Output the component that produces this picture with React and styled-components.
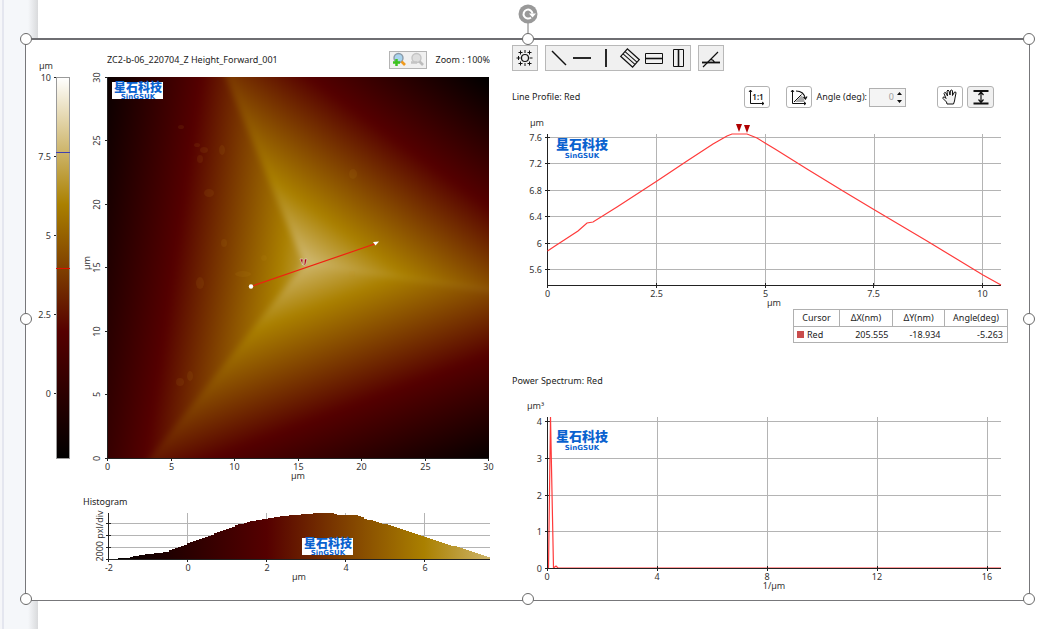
import React from 'react';
import styled, { createGlobalStyle, css } from "styled-components";


const GlobalStyle = createGlobalStyle`
  * {
    box-sizing: border-box;
  }

  body {
    margin: 0;
    background: #fff;
    font-family: "Noto Sans", "Noto Sans CJK SC", sans-serif;
    font-size: 9px;
    line-height: 12px;
    color: #222;
  }

  button, input {
    font: inherit;
    color: inherit;
  }
`;

const Page = styled.main`
  min-height: 100vh;
  padding: 38px 12px 28px 25px;
  background: linear-gradient(
    90deg,
    #f5f6f9 0 2px,
    #e4e6ef 2px 4px,
    #f5f7fa 4px 28px,
    #d9dadc 38px,
    #fff 38px
  );
`;

const Frame = styled.section`
  position: relative;
  display: grid;
  grid-template-columns: minmax(0, 464fr) minmax(0, 496fr);
  column-gap: 22px;
  padding: 0 21px 6px 0;
  background: #fff;
  border: 1px solid #77777a;
  border-top: 2px solid #6e6e72;
`;

const Handle = styled.span`
  position: absolute;
  left: ${({ $x }) => $x};
  top: ${({ $y }) => $y};
  width: 12px;
  height: 12px;
  margin: -7px 0 0 -6px;
  border: 1px solid #6a6a6a;
  border-radius: 50%;
  background: #fff;
`;

const RotateHandle = styled.svg`
  position: absolute;
  left: 50%;
  top: -36px;
  width: 20px;
  height: 30px;
  margin-left: -10px;
`;

const Left = styled.div`
  display: grid;
  grid-template-columns: minmax(0, 57fr) minmax(0, 407fr);
  grid-template-rows: auto auto auto auto;
  align-content: start;
`;

const BarCell = styled.div`
  grid-column: 1;
  grid-row: 1 / span 2;
`;

const MapCell = styled.div`
  grid-column: 2;
`;

const MapHeader = styled.div`
  grid-column: 2;
  display: flex;
  align-items: center;
  height: 34px;
  padding: 5px 0 0 24px;
`;

const ZoomButtons = styled.div`
  display: flex;
  margin-left: auto;
  margin-right: 9px;
  border: 1px solid #b4b4b4;
  background: #f0f0f0;
`;

const HistogramTitle = styled.h2`
  grid-column: 2;
  margin: 0;
  padding: 12px 0 1px;
  font-size: 9px;
  font-weight: 400;
`;

const Right = styled.div`
  display: flex;
  flex-direction: column;
`;

const Toolbar = styled.div`
  display: flex;
  gap: 7px;
  padding-top: 5px;
`;

const ToolGroup = styled.div`
  display: flex;
  border: 1px solid #b8b8b8;
  background: #f0f0f0;
`;

const IconButton = styled.button`
  display: flex;
  align-items: center;
  justify-content: center;
  flex: none;
  width: ${({ $w }) => $w || 24}px;
  height: ${({ $h }) => $h || 24}px;
  padding: 0;
  border: 0;
  background: none;
  ${({ $boxed }) => $boxed && css`
    border: 1px solid #b2b2b2;
    border-radius: 3px;
    background: ${({ $active }) => ($active ? '#f0f0f0' : '#fff')};
  `}
`;

const Title = styled.h2`
  margin: 0;
  font-size: 9px;
  font-weight: 400;
  margin-top: ${({ $top }) => $top || 0}px;
`;

const ProfileHeader = styled.div`
  display: flex;
  align-items: center;
  padding: 15px 14px 8px 0;
`;

const ProfileTools = styled.div`
  display: flex;
  align-items: center;
  gap: 4px;
  margin-left: auto;
`;

const AngleLabel = styled.label`
  display: flex;
  align-items: center;
  gap: 2px;
  margin: 0 27px 0 0;
`;

const ScaleButton = styled(IconButton)`
  margin-right: 12px;
`;

const Spinner = styled.span`
  display: flex;
  align-items: center;
  width: 37px;
  height: 19px;
  border: 1px solid #b0b0b0;
  background: #f4f4f4;
`;

const AngleInput = styled.input`
  flex: 1;
  min-width: 0;
  width: 20px;
  padding: 0;
  border: 0;
  background: none;
  color: #a0a0a0;
  text-align: right;
`;

const Chart = styled.svg`
  display: block;
  width: 100%;
  height: auto;
  overflow: visible;

  text {
    font-size: 9px;
    fill: #333;
  }
`;

const Grid = styled.path`
  stroke: #b4b4b4;
  stroke-width: 1;
  fill: none;
  shape-rendering: crispEdges;
`;

const Axis = styled.path`
  stroke: #222;
  stroke-width: 1;
  fill: none;
  shape-rendering: crispEdges;
`;

const Trace = styled.polyline`
  fill: none;
  stroke: #ff3a3a;
  stroke-width: 1.2;
`;

const LogoName = styled.text`
  && {
    font-family: "Noto Sans CJK SC", sans-serif;
    font-weight: 900;
    font-size: ${({ $size }) => $size}px;
    fill: #0a62cf;
  }
`;

const LogoLatin = styled.text`
  && {
    font-family: "DejaVu Sans", sans-serif;
    font-weight: 700;
    font-size: 7px;
    fill: #0a62cf;
  }
`;

const RatioText = styled.text`
  font-size: 8px;
  font-weight: 600;
  fill: #111;
  stroke: none;
`;

const CursorTable = styled.table`
  align-self: flex-end;
  width: 215px;
  table-layout: fixed;
  border-collapse: collapse;
  border: 1px solid #b0b0b0;

  th, td {
    height: 16px;
    padding: 0 4px;
    font-weight: 400;
  }

  th {
    height: 17px;
    padding: 0;
    border: 1px solid #b0b0b0;
    text-align: center;
  }

  td {
    text-align: right;
  }

  td:first-child {
    padding-left: 3px;
    text-align: left;
  }

  th:nth-child(1) { width: 46px; }
  th:nth-child(2) { width: 53px; }
  th:nth-child(3) { width: 52px; }
`;

const Swatch = styled.span`
  display: inline-block;
  width: 7px;
  height: 7px;
  margin-right: 3px;
  background: #c94c4c;
`;


const palette = [
  [0, '#000000'],
  [1 / 3, '#550000'],
  [2 / 3, '#aa8000'],
  [1, '#ffffff'],
];

const PaletteStops = () => palette.map(([t, color]) => (
  <stop key={t} offset={t} stopColor={color} />
));

const Logo = ({ x, y, boxed }) => (
  <g transform={`translate(${x} ${y})`}>
    {boxed && <rect width="51" height="17" fill="#fff" />}
    <LogoName $size={boxed ? 12 : 13} x="26" y={boxed ? 10 : 9} textAnchor="middle">星石科技</LogoName>
    <LogoLatin x="26" y={boxed ? 17 : 18} textAnchor="middle">SinGSUK</LogoLatin>
  </g>
);

const ColorBar = () => (
  <Chart viewBox="0 0 57 444" role="img" aria-label="Height scale">
    <defs>
      <linearGradient id="scale" x1="0" y1="1" x2="0" y2="0">
        <PaletteStops />
      </linearGradient>
    </defs>
    <text x="13" y="29">µm</text>
    <rect x="30.5" y="37.5" width="13" height="381" fill="url(#scale)" stroke="#9a9a9a" />
    {[10, 7.5, 5, 2.5, 0].map((v, i) => (
      <g key={v}>
        <Axis d={`M28 ${37.5 + i * 79}h2`} />
        <text x="25" y={41 + i * 79} textAnchor="end">{v}</text>
      </g>
    ))}
    <path d="M30 112.5h14" stroke="#4040b0" />
    <path d="M30 228.5h14" stroke="#e01000" />
  </Chart>
);

// faces of the scanned pyramid, each a plane shaded from its foot to the apex
const faces = [
  { id: 'left', points: '-20,-48 117,-5 119,0 197,187 44,380 38,388 -20,400', axis: [-37, 166, 278, 212] },
  { id: 'top', points: '117,-5 119,0 197,187 381,213 400,216 400,-20 110,-20', axis: [381, 0, 197, 255] },
  { id: 'bottom', points: '400,216 381,213 197,187 44,380 36,390 400,400', axis: [381, 390, 271, 95] },
];

const specks = [
  [97, 73, 4, 3], [115, 73, 3, 5], [90, 68, 3, 2], [93, 82, 3, 4], [102, 116, 5, 4], [93, 206, 4, 6],
  [74, 50, 3, 2], [246, 97, 4, 5], [73, 305, 4, 4], [83, 299, 3, 5], [136, 197, 8, 3],
  [117, 166, 3, 4], [245, 197, 3, 3], [214, 214, 3, 2], [157, 181, 3, 3],
];

const HeightMap = () => (
  <Chart viewBox="0 0 407 410" role="img" aria-label="Height map">
    <defs>
      {faces.map(({ id, axis }) => (
        <linearGradient key={id} id={id} gradientUnits="userSpaceOnUse" x1={axis[0]} y1={axis[1]} x2={axis[2]} y2={axis[3]}>
          <PaletteStops />
        </linearGradient>
      ))}
      <clipPath id="scan"><rect width="382" height="382" /></clipPath>
      <filter id="round" x="-5%" y="-5%" width="110%" height="110%" colorInterpolationFilters="sRGB">
        <feGaussianBlur stdDeviation="3" />
      </filter>
    </defs>
    <g transform="translate(24 3)">
      <g clipPath="url(#scan)">
        <g filter="url(#round)">
          <rect x="-20" y="-20" width="420" height="420" fill="url(#left)" />
          {faces.map(({ id, points }) => <polygon key={id} points={points} fill={`url(#${id})`} />)}
        </g>
        {specks.map(([x, y, rx, ry]) => (
          <ellipse key={`${x}-${y}`} cx={x} cy={y} rx={rx} ry={ry} fill="#c09020" opacity="0.1" />
        ))}
      </g>
      <Logo x={5} y={5} boxed />
      <path d="M144 209.500L269 166.500" stroke="#f02010" strokeWidth="1.2" />
      <circle cx="144" cy="209.500" r="2.200" fill="#fff" />
      <path d="M266 165l6 -0.500l-3.500 4z" fill="#fff" />
      <path d="M193 182h3l-0.500 6zM197.500 182h2.500l-1.500 6l-1.500 1z" fill="#b00010" stroke="#ddc" strokeWidth="0.600" />
      <Axis d="M0.500 0V381.500H382" />
      {[0, 5, 10, 15, 20, 25, 30].map((v, i) => {
        const p = Math.min(381.5, Math.round(i * 63.6) + 0.5);
        return (
          <g key={v}>
            <Axis d={`M${p} 381v3M-2 ${382 - p}h2`} />
            <text x={p} y="393" textAnchor="middle">{v}</text>
            <text transform={`translate(-7 ${382 - p}) rotate(-90)`} textAnchor="middle">{v}</text>
          </g>
        );
      })}
      <text x="191" y="402" textAnchor="middle">µm</text>
      <text transform="translate(-17 186) rotate(-90)" textAnchor="middle">µm</text>
    </g>
  </Chart>
);

// [x, count height] outline of the distribution
const counts = [
  [0, 0], [16, 1], [31, 4], [56, 7], [79, 16], [101, 24], [127, 34], [141, 38], [161, 41], [174, 43],
  [197, 45], [208, 46], [221, 46], [228, 44], [247, 44], [256, 40], [278, 34], [314, 22], [335, 15],
  [355, 10], [380, 1],
];

const countAt = (x) => {
  const i = Math.max(1, counts.findIndex(([cx]) => cx >= x));
  const [x0, y0] = counts[i - 1];
  const [x1, y1] = counts[i];
  return y0 + ((x - x0) / (x1 - x0)) * (y1 - y0);
};

const histogramPath = () => {
  let d = 'M26 50';
  for (let x = 0; x < 380; x += 3) {
    d += `V${50 - Math.round(countAt(x))}H${Math.min(x + 29, 407)}`;
  }
  return `${d}V50Z`;
};

const Histogram = () => (
  <Chart viewBox="0 0 407 76" role="img" aria-label="Height histogram">
    <defs>
      <linearGradient id="counts" gradientUnits="userSpaceOnUse" x1="26" y1="0" x2="499" y2="0">
        <PaletteStops />
      </linearGradient>
    </defs>
    <Grid d="M25 14.500H407M25 26.500H407M25 38.500H407M104.500 4V50M183.500 4V50M262.500 4V50M341.500 4V50" />
    <path d={histogramPath()} fill="url(#counts)" shapeRendering="crispEdges" />
    <Logo x={219} y={29} boxed />
    <Axis d="M25.500 4V50.500H407M23 14.500h5M23 26.500h5M23 38.500h5M23 50.500h5" />
    {[-2, 0, 2, 4, 6].map((v, i) => (
      <g key={v}>
        <Axis d={`M${25.5 + i * 79} 50v3`} />
        <text x={26 + i * 79} y="62" textAnchor="middle">{v}</text>
      </g>
    ))}
    <text x="216" y="71" textAnchor="middle">µm</text>
    <text transform="translate(20 27) rotate(-90)" textAnchor="middle">2000 pxl/div</text>
  </Chart>
);

const profile = '35.500,135 43,130 66,115 75,107 81,106 105,91 145,65 175,45 201,28 215,20 220,18 235,18 '
  + '245,22 253,27 263,33 295,53 331,75 361,93 388,109 415,125 448,145 471,159 489,169';

const LineProfile = () => (
  <Chart viewBox="0 0 496 193" role="img" aria-label="Line profile">
    <text x="18" y="10">µm</text>
    <Grid d="M144.500 18V169M253.500 18V169M362.500 18V169M470.500 18V169" />
    {['7.6', '7.2', '6.8', '6.4', '6', '5.6'].map((v, i) => {
      const y = Math.round(21 + i * 26.4) + 0.5;
      return (
        <g key={v}>
          <Grid d={`M36 ${y}H489`} />
          <Axis d={`M33 ${y}h5`} />
          <text x="30" y={y + 3} textAnchor="end">{v}</text>
        </g>
      );
    })}
    <Axis d="M35.500 18V169.500H489" />
    {[0, 2.5, 5, 7.5, 10].map((v, i) => {
      const x = Math.round(35 + i * 108.8) + 0.5;
      return (
        <g key={v}>
          <Axis d={`M${x} 167v5`} />
          <text x={x} y="181" textAnchor="middle">{v}</text>
        </g>
      );
    })}
    <text x="262" y="190" textAnchor="middle">µm</text>
    <Trace points={profile} />
    <path d="M224 8h6l-3 8zM232 9h6l-3 8z" fill="#b00000" />
    <Logo x={44} y={24} />
  </Chart>
);

const PowerSpectrum = () => (
  <Chart viewBox="0 0 496 196" role="img" aria-label="Power spectrum">
    <text x="15" y="11">µm³</text>
    <Grid d="M145.500 19V170M255.500 19V170M365.500 19V170M475.500 19V170" />
    {[4, 3, 2, 1, 0].map((v, i) => {
      const y = Math.round(23 + i * 36.75) + 0.5;
      return (
        <g key={v}>
          {v > 0 && <Grid d={`M36 ${y}H489`} />}
          <Axis d={`M33 ${y}h5`} />
          <text x="30" y={y + 3} textAnchor="end">{v}</text>
        </g>
      );
    })}
    <Trace points="36.500,170 38.500,19 41.500,170 44,168 46,170 489,170" />
    <Axis d="M35.500 19V170.500H489" />
    {[0, 4, 8, 12, 16].map((v, i) => (
      <g key={v}>
        <Axis d={`M${35.5 + i * 110} 168v5`} />
        <text x={35 + i * 110} y="182" textAnchor="middle">{v}</text>
      </g>
    ))}
    <text x="262" y="191" textAnchor="middle">1/µm</text>
    <Logo x={44} y={34} />
  </Chart>
);

const Icon = ({ w = 22, h = 22, children }) => (
  <svg width={w} height={h} viewBox={`0 0 ${w} ${h}`} fill="none" stroke="#111" strokeWidth="1.200" aria-hidden="true">
    {children}
  </svg>
);

const Magnifier = ({ off }) => (
  <svg width="18" height="16" viewBox="0 0 18 16" fill="none" aria-hidden="true">
    <circle cx="8.500" cy="6" r="4.500" fill={off ? '#dedede' : '#a9d4ee'} stroke={off ? '#c4c4c4' : '#8b9aa8'} strokeWidth="1.400" />
    <path d="M11.500 9.500l3.500 3.500" stroke={off ? '#bcbcbc' : '#ef9a1e'} strokeWidth="2.600" />
    {off
      ? <path d="M3 10.500h6" stroke="#c4c4c4" strokeWidth="2.500" />
      : <path d="M6.500 7v7M3 10.500h7" stroke="#3cc21e" strokeWidth="2.500" />}
  </svg>
);

const lineTools = [
  ['Line', <path d="M5 4l14 14" strokeWidth="1.400" />],
  ['Horizontal line', <path d="M2 11h18" strokeWidth="1.800" />],
  ['Vertical line', <path d="M11 2v18" strokeWidth="1.800" />],
  ['Region', <g transform="rotate(42 11 11)"><path d="M3 6h16v10H3z" /><path d="M3 9.500h16M3 12.500h16" strokeWidth="1" /></g>],
  ['Horizontal region', <><path d="M2.500 6.500h17v10h-17z" strokeWidth="1" /><path d="M2 11.500h18" strokeWidth="1.600" /></>],
  ['Vertical region', <><path d="M6.500 2.500h10v17h-10z" strokeWidth="1" /><path d="M11.500 2v18" strokeWidth="1.600" /></>],
];

const App = () => (
  <>
    <GlobalStyle />
    <Page>
      <Frame>
        <Left>
          <BarCell><ColorBar /></BarCell>
          <MapHeader>
            <span>ZC2-b-06_220704_Z Height_Forward_001</span>
            <ZoomButtons>
              <IconButton $w={18} $h={16} aria-label="Zoom in"><Magnifier /></IconButton>
              <IconButton $w={18} $h={16} aria-label="Zoom out"><Magnifier off /></IconButton>
            </ZoomButtons>
            <span>Zoom : 100%</span>
          </MapHeader>
          <MapCell><HeightMap /></MapCell>
          <HistogramTitle>Histogram</HistogramTitle>
          <MapCell><Histogram /></MapCell>
        </Left>

        <Right>
          <Toolbar>
            <ToolGroup>
              <IconButton aria-label="Point">
                <Icon>
                  <circle cx="11" cy="11" r="3.500" />
                  <path d="M2.500 11h4M4.500 9v4M15.500 11h3M11 3v3M11 16v3M4.500 5.500h4M6.500 3.500v4M13.500 5.500h4M15.500 3.500v4M4.500 16.500h4M6.500 14.500v4M13.500 16.500h4M15.500 14.500v4" strokeWidth="1" />
                </Icon>
              </IconButton>
            </ToolGroup>
            <ToolGroup>
              {lineTools.map(([name, shape]) => (
                <IconButton key={name} aria-label={name}><Icon>{shape}</Icon></IconButton>
              ))}
            </ToolGroup>
            <ToolGroup>
              <IconButton aria-label="Angle">
                <Icon>
                  <path d="M2 15.500h18" strokeWidth="1.800" />
                  <path d="M3 20L18 5M10.500 12.500q3 0 4 3" />
                </Icon>
              </IconButton>
            </ToolGroup>
          </Toolbar>

          <ProfileHeader>
            <Title>Line Profile: Red</Title>
            <ProfileTools>
              <ScaleButton $boxed $w={26} $h={22} aria-label="1:1">
                <Icon w={18} h={18}>
                  <path d="M2.500 2v13.500H16M1 4l1.500 -2l1.500 2M14 14l2 1.500l-2 1.500" strokeWidth="1" />
                  <RatioText x="10" y="12" textAnchor="middle">1:1</RatioText>
                </Icon>
              </ScaleButton>
              <IconButton $boxed $w={26} $h={22} aria-label="Rotate profile">
                <Icon w={18} h={18}>
                  <path d="M5 14L11.500 7.500q3 2.500 3 6.500z" fill="#aaa" stroke="none" />
                  <path d="M2.500 2V15.500H16M1 4l1.500 -2l1.500 2M14 14l2 1.500l-2 1.500M4 14l7.500 -7.500" strokeWidth="1" />
                  <path d="M6 3q8 0 9.500 8M13.500 9l2 2l1.500 -2.500" strokeWidth="1.200" />
                </Icon>
              </IconButton>
              <AngleLabel>
                Angle (deg):
                <Spinner>
                  <AngleInput defaultValue="0" disabled />
                  <svg width="11" height="17" viewBox="0 0 11 17" aria-hidden="true">
                    <path d="M3 6L5.500 3L8 6zM3 11L5.500 14L8 11z" fill="#111" />
                  </svg>
                </Spinner>
              </AngleLabel>
              <IconButton $boxed $w={26} $h={22} aria-label="Pan">
                <Icon w={18} h={18}>
                  <path
                    d="M6 16L5.500 14L2 10.500Q1.500 8.500 3.500 9L5 10.500L3 5.500Q3.500 3.500 5 5L6.500 8L6 3Q7 1 8 3L9 7L9.500 2.500Q11 1 11.500 3L11.500 7.500L13.500 4Q15 3.500 15 5L14 10L13.500 13L12.500 16Z"
                    fill="#f2f2f2"
                    strokeWidth="1"
                  />
                </Icon>
              </IconButton>
              <IconButton $boxed $active $w={27} $h={22} aria-label="Fit height">
                <Icon w={18} h={18}>
                  <path d="M1.500 3H16.500M1.500 15.500H16.500" strokeWidth="1.800" />
                  <path d="M9 4v11M6.500 7L9 4l2.500 3M6.500 11.500L9 14.500l2.500 -3" />
                </Icon>
              </IconButton>
            </ProfileTools>
          </ProfileHeader>

          <LineProfile />
          <CursorTable>
            <thead>
              <tr><th>Cursor</th><th>ΔX(nm)</th><th>ΔY(nm)</th><th>Angle(deg)</th></tr>
            </thead>
            <tbody>
              <tr><td><Swatch />Red</td><td>205.555</td><td>-18.934</td><td>-5.263</td></tr>
            </tbody>
          </CursorTable>

          <Title $top={32}>Power Spectrum: Red</Title>
          <Title as="div" $top={11}><PowerSpectrum /></Title>
        </Right>

        <RotateHandle viewBox="0 0 20 30" aria-hidden="true">
          <path d="M10 18v12" stroke="#777" />
          <circle cx="10" cy="10" r="9.500" fill="#999" />
          <path d="M13 13.500a4.500 4.500 0 1 1 1.500 -4" fill="none" stroke="#fff" strokeWidth="2" />
          <path d="M11 9.500h7l-3.500 4z" fill="#fff" />
        </RotateHandle>
        {['0%', '50%', '100%'].map((y) => ['0%', '50%', '100%'].map((x) => (
          !(x === '50%' && y === '50%') && <Handle key={x + y} $x={x} $y={y} />
        )))}
      </Frame>
    </Page>
  </>
);
export default App;
